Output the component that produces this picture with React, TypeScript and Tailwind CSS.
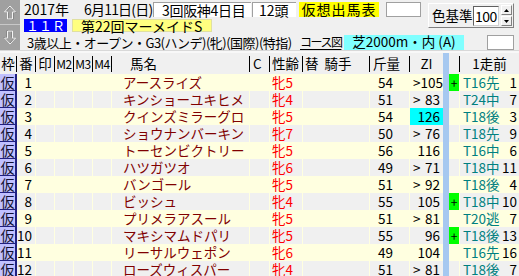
import React from 'react';

type Horse = {
  no: number;
  name: string;
  sex: string;
  kin: string;
  gt: boolean;
  zi: string;
  hi?: boolean;
  plus?: boolean;
  prev: string;
  pos: string;
};

const horses: Horse[] = [
  { no: 1, name: 'アースライズ', sex: '牝5', kin: '54', gt: true, zi: '105', plus: true, prev: 'T16先', pos: '1' },
  { no: 2, name: 'キンショーユキヒメ', sex: '牝4', kin: '51', gt: true, zi: '83', prev: 'T24中', pos: '7' },
  { no: 3, name: 'クインズミラーグロ', sex: '牝5', kin: '54', gt: false, zi: '126', hi: true, prev: 'T18後', pos: '3' },
  { no: 4, name: 'ショウナンバーキン', sex: '牝7', kin: '50', gt: true, zi: '76', prev: 'T18先', pos: '9' },
  { no: 5, name: 'トーセンビクトリー', sex: '牝5', kin: '56', gt: false, zi: '116', prev: 'T16中', pos: '6' },
  { no: 6, name: 'ハツガツオ', sex: '牝6', kin: '49', gt: true, zi: '71', prev: 'T18中', pos: '11' },
  { no: 7, name: 'バンゴール', sex: '牝5', kin: '51', gt: true, zi: '92', prev: 'T18後', pos: '4' },
  { no: 8, name: 'ビッシュ', sex: '牝4', kin: '55', gt: false, zi: '105', plus: true, prev: 'T18中', pos: '10' },
  { no: 9, name: 'プリメラアスール', sex: '牝5', kin: '51', gt: true, zi: '81', prev: 'T20逃', pos: '7' },
  { no: 10, name: 'マキシマムドパリ', sex: '牝5', kin: '55', gt: false, zi: '96', plus: true, prev: 'T18後', pos: '13' },
  { no: 11, name: 'リーサルウェポン', sex: '牝6', kin: '49', gt: false, zi: '104', prev: 'T16先', pos: '16' },
  { no: 12, name: 'ローズウィスパー', sex: '牝4', kin: '51', gt: true, zi: '81', prev: 'T18後', pos: '7' },
];

function Arrow({ down }: { down?: boolean }) {
  return (
    <svg width="14" height="17" viewBox="0 0 14 17" className={down ? 'rotate-180' : ''}>
      <path d="M7.5 2.5 L13 8.5 L10 8.5 L10 15.5 L5 15.5 L5 8.5 L2 8.5 Z" fill="none" stroke="#707070" strokeWidth="1" />
      <path d="M7 2 L12.5 8 L9.5 8 L9.5 15 L4.5 15 L4.5 8 L1.5 8 Z" fill="none" stroke="#f4f4f4" strokeWidth="1" />
    </svg>
  );
}

function HeadCell({ w, children, className = '' }: { w: string; children?: React.ReactNode; className?: string }) {
  return (
    <div className={`${w} h-[16px] shrink-0 border-r border-black flex items-center ${className}`}>{children}</div>
  );
}

export default function App() {
  return (
    <div className="w-[519px] h-[276px] overflow-hidden whitespace-nowrap bg-[#f0f0f0] text-black font-['Noto_Sans_CJK_JP',sans-serif] text-[13.5px] leading-none">
      {/* top info area */}
      <div className="flex h-[50px]">
        <div className="w-[20px] flex flex-col">
          <div className="h-[25px] bg-[#a0a0a0] border-b border-[#c8c8c8] flex items-center justify-center">
            <Arrow />
          </div>
          <div className="h-[25px] bg-[#a0a0a0] flex items-center justify-center">
            <Arrow down />
          </div>
        </div>
        <div className="flex-1 flex flex-col">
          <div className="flex h-[33px]">
            <div className="w-[408px] flex flex-col">
              <div className="flex items-center h-[16px] mt-[1px] text-[14px]">
                <span className="w-[64px] pl-[4px]">2017年</span>
                <span className="w-[69px] tracking-[-0.8px]">6月11日(日)</span>
                <div className="w-[98px] h-[15px] bg-white border-t border-l border-[#a0a0a0] pl-[8px] flex items-center tracking-[-0.3px]">3回阪神4日目</div>
                <div className="w-[44px] h-[15px] ml-[1px] bg-white border-t border-l border-[#a0a0a0] pl-[6px] flex items-center">12頭</div>
                <div className="w-[80px] h-[15px] ml-[3px] bg-[#ffff00] flex items-center justify-center tracking-[1px]">仮想出馬表</div>
                <div className="w-[35px] h-[15px] ml-[7px] bg-white border border-[#a0a0a0]"></div>
              </div>
              <div className="flex items-center h-[13px] mt-[2px]">
                <div className="ml-[4px] w-[43px] h-[13px] bg-[#0000ff] text-white text-[13px] flex items-center justify-center">１１Ｒ</div>
                <div className="ml-[5px] w-[140px] h-[13px] bg-[#ffff80] border border-[#e0e0a0] pl-[8px] flex items-center text-[14px]">第22回マーメイドS</div>
              </div>
            </div>
            <div className="w-[86px] h-[25px] mt-[3px] bg-[#f0f0f0] border border-t-white border-l-white border-r-[#808080] border-b-[#808080] flex items-center">
              <span className="pl-[3px] w-[44px] text-[13.5px]">色基準</span>
              <div className="w-[26px] h-[20px] bg-white border border-t-[#606060] border-l-[#606060] border-r-[#d0d0d0] border-b-[#d0d0d0] flex items-center text-[14px] pl-[1px] tracking-[-0.5px]">100</div>
              <div className="ml-[2px] w-[11px] flex flex-col gap-[1px]">
                <div className="h-[10px] bg-[#f0f0f0] border border-t-white border-l-white border-r-[#808080] border-b-[#808080] flex items-center justify-center">
                  <svg width="5" height="3" viewBox="0 0 5 3"><path d="M2.5 0 L5 3 L0 3 Z" fill="#000" /></svg>
                </div>
                <div className="h-[10px] bg-[#f0f0f0] border border-t-white border-l-white border-r-[#808080] border-b-[#808080] flex items-center justify-center">
                  <svg width="5" height="3" viewBox="0 0 5 3"><path d="M0 0 L5 0 L2.5 3 Z" fill="#000" /></svg>
                </div>
              </div>
            </div>
          </div>
          <div className="flex items-center h-[16px] mt-[1px]">
            <span className="w-[280px] pl-[7px] text-[13px] tracking-[-0.5px]">3歳以上・オープン・G3(ハンデ)(牝)(国際)(特指)</span>
            <span className="w-[44px] underline underline-offset-2 text-[12px] tracking-[-1.5px]">コース図</span>
            <div className="w-[120px] h-[15px] bg-[#80ffff] flex items-center justify-center">芝2000m・内 (A)</div>
            <div className="w-[27px] h-[15px] ml-[23px] bg-white border border-[#a0a0a0]"></div>
          </div>
        </div>
      </div>

      <div className="h-[3px] border-t border-[#d8d8d8] bg-[#f8f8f8]"></div>

      {/* header */}
      <div className="flex items-center h-[21px] py-[2px] bg-[#f0f0f0]">
        <HeadCell w="w-[17px]" className="justify-center">枠</HeadCell>
        <HeadCell w="w-[19px]" className="justify-center">番</HeadCell>
        <HeadCell w="w-[19px]" className="justify-center">印</HeadCell>
        <HeadCell w="w-[19px]" className="justify-center text-[12px] tracking-[-0.5px]">M2</HeadCell>
        <HeadCell w="w-[19px]" className="justify-center text-[12px] tracking-[-0.5px]">M3</HeadCell>
        <HeadCell w="w-[19px]" className="justify-center text-[12px] tracking-[-0.5px]">M4</HeadCell>
        <HeadCell w="w-[138px]" className="pl-[18px]">馬名</HeadCell>
        <HeadCell w="w-[20px]" className="pl-[3px]">C</HeadCell>
        <HeadCell w="w-[33px]" className="pl-[2px]">性齢</HeadCell>
        <HeadCell w="w-[67px]" className="pl-[2px]">替&nbsp;&nbsp;騎手</HeadCell>
        <HeadCell w="w-[40px]" className="pl-[3px]">斤量</HeadCell>
        <div className="w-[33px] h-[16px] shrink-0 flex items-center justify-center">ZI</div>
        <div className="w-[6px] h-[21px] shrink-0 bg-[#a6c8f0]"></div>
        <HeadCell w="w-[11px]"></HeadCell>
        <div className="w-[59px] h-[16px] shrink-0 flex items-center justify-center">1走前</div>
      </div>

      {/* rows */}
      {horses.map((h, i) => {
        const bg = i % 2 === 0 ? 'bg-[#ffffe0]' : 'bg-[#f0f0f0]';
        const cell = 'h-full shrink-0 border-r border-[#ffffe0] flex items-center';
        return (
          <div key={h.no} className={`flex h-[17px] ${bg}`}>
            <div className="w-[17px] h-full shrink-0 bg-[#c0c0ff] border-r-2 border-b border-[#202080] flex items-center justify-center text-[14px] text-[#101030]">仮</div>
            <div className={`w-[19px] ${cell} justify-end pr-[3px]`}>{h.no}</div>
            <div className={`w-[19px] ${cell}`}></div>
            <div className={`w-[19px] ${cell}`}></div>
            <div className={`w-[19px] ${cell}`}></div>
            <div className={`w-[19px] ${cell}`}></div>
            <div className={`w-[138px] ${cell} pl-[11px] text-[#800000]`}>{h.name}</div>
            <div className={`w-[20px] ${cell}`}></div>
            <div className={`w-[33px] ${cell} pl-[2px] text-[#ff0000]`}>{h.sex}</div>
            <div className={`w-[67px] ${cell}`}></div>
            <div className={`w-[40px] ${cell} justify-end pr-[16px]`}>{h.kin}</div>
            <div className={`w-[33px] h-full shrink-0 flex items-center px-[3px] ${h.gt ? 'justify-between' : 'justify-end'} ${h.hi ? 'bg-[#00ffff]' : ''}`}>
              {h.gt && <span>&gt;</span>}
              <span>{h.zi}</span>
            </div>
            <div className="w-[6px] h-full shrink-0 bg-[#a6c8f0]"></div>
            <div className={`w-[11px] ${cell} justify-center ${h.plus ? 'bg-[#00ff00]' : ''} text-[12px]`}>{h.plus ? '+' : ''}</div>
            <div className="w-[59px] h-full shrink-0 flex items-center justify-between pl-[3px] pr-[2px]">
              <span className="text-[#008080]">{h.prev}</span>
              <span>{h.pos}</span>
            </div>
          </div>
        );
      })}
    </div>
  );
}
